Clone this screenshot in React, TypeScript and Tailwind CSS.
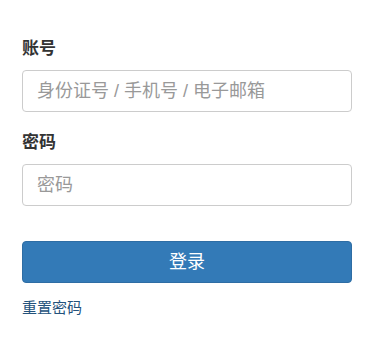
import React from 'react'

export default function App() {
  return (
    <div
      className="w-[380px] h-[344px] bg-white pl-[22px] pt-[37px]"
      style={{ fontFamily: '"Liberation Sans", "Noto Sans CJK SC", sans-serif' }}
    >
      <form className="flex flex-col w-[330px]" onSubmit={(e) => e.preventDefault()}>
        <label className="block text-[17px] leading-[24px] font-bold text-[#333] mb-[9px]">账号</label>
        <input
          placeholder="身份证号 / 手机号 / 电子邮箱"
          className="w-full h-[42px] border border-[#cccccc] rounded-[4px] px-[14px] text-[18px] text-[#555] placeholder:text-[#999] outline-none"
        />
        <label className="block text-[17px] leading-[24px] font-bold text-[#333] mt-[19px] mb-[9px]">密码</label>
        <input
          type="password"
          placeholder="密码"
          className="w-full h-[42px] border border-[#cccccc] rounded-[4px] px-[14px] text-[18px] text-[#555] placeholder:text-[#999] outline-none"
        />
        <button
          type="submit"
          className="mt-[35px] w-full h-[42px] rounded-[4px] bg-[#337ab7] border border-[#2e6da4] text-white text-[18px]"
        >
          登录
        </button>
        <a href="#" className="mt-[14px] text-[15px] leading-[22px] text-[#23527c] self-start">
          重置密码
        </a>
      </form>
    </div>
  )
}
